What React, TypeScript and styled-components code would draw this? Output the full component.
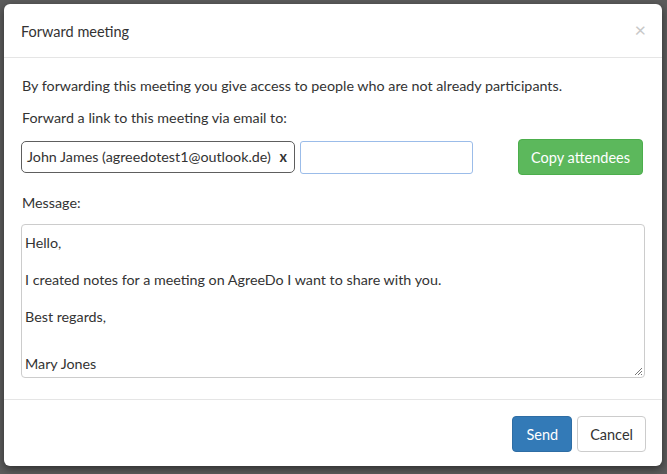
import React from 'react';
import styled, {createGlobalStyle} from "styled-components";

const GlobalStyle = createGlobalStyle`
  html, body {
    margin: 0;
    padding: 0;
    background: #5c5c5c;
  }
  body {
    font-family: Lato, "Liberation Sans", sans-serif;
    font-size: 14.3px;
    color: #333;
  }
`

const messageLines = [
    {text: "Hello,", gap: 0},
    {text: "I created notes for a meeting on AgreeDo I want to share with you.", gap: 19},
    {text: "Best regards,", gap: 19},
    {text: "Mary Jones", gap: 29},
];

export default function App() {
    return (
        <>
            <GlobalStyle/>
            <Backdrop>
                <Modal>
                    <Header>
                        <Title>Forward meeting</Title>
                        <CloseButton aria-label="Close">×</CloseButton>
                    </Header>
                    <Body>
                        <Paragraph>By forwarding this meeting you give access to people who are not already participants.</Paragraph>
                        <Paragraph>Forward a link to this meeting via email to:</Paragraph>
                        <InviteRow>
                            <Inputs>
                                <ChipBox>
                                    <ChipText>John James (agreedotest1@outlook.de)</ChipText>
                                    <ChipRemove>x</ChipRemove>
                                </ChipBox>
                                <EmailInput type="text"/>
                            </Inputs>
                            <Button variant="success">Copy attendees</Button>
                        </InviteRow>
                        <Label>Message:</Label>
                        <MessageBox>
                            {messageLines.map(line => (
                                <MessageLine key={line.text} gap={line.gap}>{line.text}</MessageLine>
                            ))}
                            <Grip width="10" height="10" viewBox="0 0 10 10">
                                <path d="M9 2 L2 9 M9 5 L5 9 M9 8 L8 9" stroke="#777" strokeWidth="1"/>
                            </Grip>
                        </MessageBox>
                    </Body>
                    <Footer>
                        <Button variant="primary">Send</Button>
                        <Button variant="default">Cancel</Button>
                    </Footer>
                </Modal>
            </Backdrop>
        </>
    );
}

const Backdrop = styled.div`
  width: 667px;
  height: 474px;
  box-sizing: border-box;
  padding: 4px 5px 8px 4px;
`

const Modal = styled.div`
  width: 658px;
  height: 462px;
  background: #fff;
  border-radius: 6px;
  box-shadow: 0 3px 9px rgba(0, 0, 0, .5);
  display: flex;
  flex-direction: column;
`

const Header = styled.div`
  height: 54px;
  box-sizing: border-box;
  border-bottom: 1px solid #e5e5e5;
  display: flex;
  align-items: center;
  justify-content: space-between;
  padding: 2px 17px 0 17px;
`

const Title = styled.h4`
  margin: 0;
  font-size: 14.5px;
  font-weight: 400;
`

const CloseButton = styled.span`
  font-size: 20px;
  line-height: 1;
  color: #c8c8c8;
  margin-top: -5px;
  margin-right: -1px;
`

const Body = styled.div`
  flex: 1;
  padding: 19px 17px 0 17px;
  display: flex;
  flex-direction: column;
`

const Paragraph = styled.p`
  margin: 0 0 14px;
  line-height: 18px;
  padding-left: 1px;

  & + & {
    margin-bottom: 12px;
  }
`

const InviteRow = styled.div`
  display: flex;
  justify-content: space-between;
  align-items: center;
`

const Inputs = styled.div`
  display: flex;
  gap: 5px;
`

const ChipBox = styled.div`
  width: 274px;
  height: 32px;
  box-sizing: border-box;
  border: 1px solid #5e5e5e;
  border-radius: 5px;
  display: flex;
  align-items: center;
  justify-content: space-between;
  padding: 0 7px 0 5px;
`

const ChipText = styled.span`
  white-space: nowrap;
`

const ChipRemove = styled.span`
  font-weight: 700;
`

const EmailInput = styled.input`
  width: 173px;
  height: 33px;
  box-sizing: border-box;
  border: 1px solid #9bbce9;
  border-radius: 3px;
  outline: none;
  font: inherit;
`

const Button = styled.button<{ variant: "success" | "primary" | "default" }>`
  height: 36px;
  box-sizing: border-box;
  padding: 0 ${({variant}) => variant === "primary" ? "13px" : "12px"};
  margin-right: ${({variant}) => variant === "success" ? "2px" : "0"};
  border-radius: 4px;
  font-family: inherit;
  font-size: 14.5px;
  cursor: pointer;
  color: ${({variant}) => variant === "default" ? "#333" : "#fff"};
  background: ${({variant}) => variant === "success" ? "#5cb85c" : variant === "primary" ? "#337ab7" : "#fff"};
  border: 1px solid ${({variant}) => variant === "success" ? "#4cae4c" : variant === "primary" ? "#2e6da4" : "#ccc"};
`

const Label = styled.div`
  margin-top: 19px;
  line-height: 18px;
  padding-left: 1px;
`

const MessageBox = styled.div`
  position: relative;
  margin-top: 12px;
  height: 154px;
  box-sizing: border-box;
  border: 1px solid #ccc;
  border-radius: 4px;
  padding: 9px 3px 0 3px;
`

const MessageLine = styled.div<{ gap: number }>`
  line-height: 18px;
  margin-top: ${({gap}) => gap}px;
`

const Grip = styled.svg`
  position: absolute;
  right: 1px;
  bottom: 1px;
`

const Footer = styled.div`
  height: 67px;
  box-sizing: border-box;
  border-top: 1px solid #e5e5e5;
  display: flex;
  justify-content: flex-end;
  align-items: center;
  gap: 5px;
  padding: 2px 16px 0 0;
`
